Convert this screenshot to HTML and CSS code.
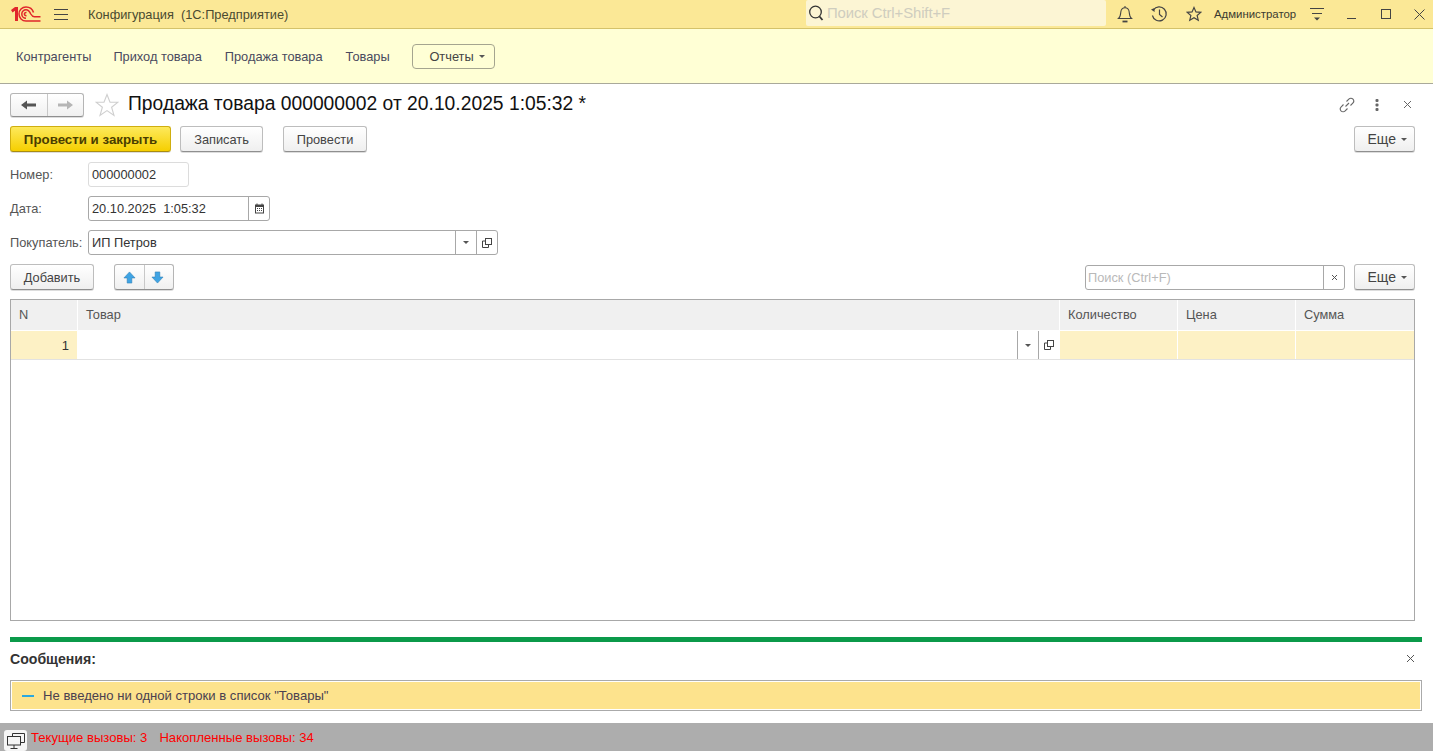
FILE: index.html
```html
<!DOCTYPE html>
<html lang="ru">
<head>
  <meta charset="UTF-8">
  <meta name="viewport" content="width=device-width, initial-scale=1.0">
  <title>Продажа товара</title>
  <link rel="stylesheet" href="styles.css">
</head>
<body>
  <header class="topbar">
    <svg class="logo" width="30" height="16" viewBox="0 0 30 16" fill="none" stroke="#e0262b" stroke-width="1.5">
      <path d="M0 4L4 1H7V15H4V4.800L1.500 6.500Z" fill="#e0262b" stroke="none"/>
      <path d="M22.500 6.500C21.500 3 18.500 1 15 1C11 1 8 4.200 8 8C8 11.800 11 15 15 15H29.500"/>
      <path d="M15 12.300C12.500 12.300 10.800 10.300 10.800 8C10.800 5.700 12.700 3.800 15 3.800C17.800 3.800 18.800 6 19.800 8C20.800 9.800 21.800 10.800 23.500 10.800H29.500"/>
      <path d="M15.500 6.500C14.300 6.300 13.400 7 13.400 8C13.400 9 14.200 9.700 15.500 9.700"/>
    </svg>
    <svg class="burger" width="14" height="12" viewBox="0 0 14 12" stroke="#444" stroke-width="1"><path d="M0 1.500H14M0 6.500H14M0 11.500H14"/></svg>
    <span class="app-title">Конфигурация&nbsp; (1С:Предприятие)</span>
    <div class="global-search">
      <svg width="16" height="18" viewBox="0 0 16 18" fill="none" stroke="#333" stroke-width="1.3"><circle cx="7.500" cy="8" r="5.800"/><path d="M11.500 12.500L14.500 16" stroke-width="1.800"/></svg>
      <span>Поиск Ctrl+Shift+F</span>
    </div>
    <svg class="ti bell" width="16" height="18" viewBox="0 0 16 18" fill="none" stroke="#444" stroke-width="1.100"><path d="M1.500 13.500C3.500 12 3.500 9.500 3.800 7C4.100 4.400 5.600 2.800 8 2.800C10.400 2.800 11.900 4.400 12.200 7C12.500 9.500 12.500 12 14.500 13.500Z"/><path d="M8 1V2.800"/><path d="M5.500 16.500H10.500" stroke-width="1.800"/></svg>
    <svg class="ti hist" width="18" height="18" viewBox="0 0 18 18" fill="none" stroke="#444" stroke-width="1.200"><path d="M3.400 5A7 7 0 1 1 2.400 10.500"/><path d="M1 4.500L4.500 3L4.600 7Z" fill="#444" stroke="none"/><path d="M9.500 4.500V9.500L12.500 12"/></svg>
    <svg class="ti star" width="16" height="16" viewBox="0 0 18 18" fill="none" stroke="#444" stroke-width="1.300"><path d="M9 1.600L11.200 6.600L16.600 7.100L12.500 10.700L13.800 16L9 13.200L4.200 16L5.500 10.700L1.400 7.100L6.800 6.600Z"/></svg>
    <span class="user">Администратор</span>
    <svg class="ti menu-more" width="14" height="14" viewBox="0 0 14 14" stroke="#444"><path d="M0 1.500H14M2 6.500H12"/><path d="M4 10.500H10L7 13.500Z" fill="#444" stroke="none"/></svg>
    <svg class="ti win min" width="10" height="12" viewBox="0 0 10 12" stroke="#444" stroke-width="1"><path d="M0 10.500H9"/></svg>
    <svg class="ti win max" width="10" height="10" viewBox="0 0 10 10" fill="none" stroke="#444" stroke-width="1"><rect x=".5" y=".5" width="9" height="9"/></svg>
    <svg class="ti win cls" width="11" height="11" viewBox="0 0 11 11" stroke="#444" stroke-width="1"><path d="M.5 .5L10.500 10.500M10.500 .5L.5 10.500"/></svg>
  </header>

  <nav class="sections">
    <a class="first">Контрагенты</a>
    <a>Приход товара</a>
    <a>Продажа товара</a>
    <a>Товары</a>
    <span class="reports">Отчеты<i class="caret"></i></span>
  </nav>

  <main class="form">
    <div class="title-row">
      <div class="btn-group nav-arrows">
        <span class="seg seg-back"><svg width="16" height="10" viewBox="0 0 16 10" fill="#555"><path d="M0 5L6 .5V3.500H15V6.500H6V9.500Z"/></svg></span>
        <span class="seg seg-fwd"><svg width="16" height="10" viewBox="0 0 16 10" fill="#b5b5b5"><path d="M15 5L9 .5V3.500H0V6.500H9V9.500Z"/></svg></span>
      </div>
      <svg class="fav" width="24" height="24" viewBox="0 0 24 24" fill="#fff" stroke="#cfcfcf" stroke-width="1.100"><path d="M12 1.500L15 9.200H23L16.600 14.200L19 22.500L12 17.600L5 22.500L7.400 14.200L1 9.200H9Z"/></svg>
      <h1>Продажа товара 000000002 от 20.10.2025 1:05:32 *</h1>
      <div class="title-tools">
        <svg width="16" height="16" viewBox="0 0 16 16" fill="none" stroke="#666" stroke-width="1.100"><path d="M6.500 9.500L10 6"/><path d="M7.500 4.500L9.800 2.200C11 1 12.800 1 14 2.200C15 3.400 15 5 13.800 6.200L11.500 8.500"/><path d="M8.500 11.500L6.200 13.800C5 15 3.200 15 2 13.800C1 12.600 1 11 2.200 9.800L4.500 7.500"/></svg>
        <svg class="dots" width="4" height="12" viewBox="0 0 4 12" fill="#666"><rect x=".5" y="0" width="3" height="3" rx="1"/><rect x=".5" y="4.500" width="3" height="3" rx="1"/><rect x=".5" y="9" width="3" height="3" rx="1"/></svg>
        <svg class="close" width="9" height="9" viewBox="0 0 9 9" stroke="#666" stroke-width="1"><path d="M1 1L8 8M8 1L1 8"/></svg>
      </div>
    </div>

    <div class="command-bar">
      <button class="btn btn-primary">Провести и закрыть</button>
      <button class="btn btn-write">Записать</button>
      <button class="btn btn-post">Провести</button>
      <button class="btn btn-more">Еще<i class="caret"></i></button>
    </div>

    <div class="field-row number-row">
      <label>Номер:</label>
      <div class="input input-number">000000002</div>
    </div>
    <div class="field-row date-row">
      <label>Дата:</label>
      <div class="input input-date">
        <span class="value">20.10.2025&nbsp; 1:05:32</span>
        <span class="addon">
          <svg width="11" height="11" viewBox="0 0 11 11" fill="#444"><path d="M1 1.500H2.500V.5H3.500V1.500H7.500V.5H8.500V1.500H10V10.500H1ZM2 4V9.500H9V4Z"/><path d="M3 5H4V6H3ZM5 5H6V6H5ZM7 5H8V6H7ZM3 7H4V8H3ZM5 7H6V8H5ZM7 7H8V8H7Z"/></svg>
        </span>
      </div>
    </div>
    <div class="field-row buyer-row">
      <label>Покупатель:</label>
      <div class="input input-buyer">
        <span class="value">ИП Петров</span>
        <span class="addon"><i class="caret"></i></span>
        <span class="addon">
          <svg width="10" height="10" viewBox="0 0 10 10" fill="none" stroke="#444"><rect x="3.500" y=".5" width="6" height="6"/><path d="M3.500 3H.5V9.500H6.500V6.500"/></svg>
        </span>
      </div>
    </div>

    <div class="table-tools">
      <button class="btn btn-add">Добавить</button>
      <div class="btn-group move">
        <span class="seg seg-up"><svg width="13" height="13" viewBox="0 0 14 14" fill="#3fa4e4" stroke="#2b7cb3" stroke-width=".6"><path d="M7 1L13 7.500H9.500V13H4.500V7.500H1Z"/></svg></span>
        <span class="seg seg-down"><svg width="13" height="13" viewBox="0 0 14 14" fill="#3fa4e4" stroke="#2b7cb3" stroke-width=".6"><path d="M7 13L13 6.500H9.500V1H4.500V6.500H1Z"/></svg></span>
      </div>
      <div class="input input-search">
        <span class="value placeholder">Поиск (Ctrl+F)</span>
        <span class="addon"><svg width="7" height="7" viewBox="0 0 7 7" stroke="#555" stroke-width="1"><path d="M1 1L6 6M6 1L1 6"/></svg></span>
      </div>
      <button class="btn btn-more">Еще<i class="caret"></i></button>
    </div>

    <div class="grid">
      <div class="grid-head">
        <div>N</div>
        <div>Товар</div>
        <div>Количество</div>
        <div>Цена</div>
        <div>Сумма</div>
      </div>
      <div class="grid-row">
        <div class="cell-num">1</div>
        <div class="cell-edit">
          <span class="spacer"></span>
          <span class="addon"><i class="caret"></i></span>
          <span class="addon">
            <svg width="10" height="10" viewBox="0 0 10 10" fill="none" stroke="#444"><rect x="3.500" y=".5" width="6" height="6"/><path d="M3.500 3H.5V9.500H6.500V6.500"/></svg>
          </span>
        </div>
        <div class="cell-ro"></div>
        <div class="cell-ro"></div>
        <div class="cell-ro"></div>
      </div>
    </div>
  </main>

  <section class="messages">
    <div class="messages-head">
      <h2>Сообщения:</h2>
      <svg width="9" height="9" viewBox="0 0 9 9" stroke="#555" stroke-width="1"><path d="M1 1L8 8M8 1L1 8"/></svg>
    </div>
    <div class="message">
      <i class="dash"></i>
      <span>Не введено ни одной строки в список "Товары"</span>
    </div>
  </section>

  <footer class="status">
    <span class="status-icon">
      <svg width="18" height="16" viewBox="0 0 18 16" fill="none" stroke="#333" stroke-width="1"><path d="M5.500 3.500V.5H17.500V9.500H13.500"/><rect x=".5" y="3.500" width="13" height="8.500"/><path d="M7 12V15M3.500 15.500H10.500"/></svg>
    </span>
    <span>Текущие вызовы: 3</span>
    <span>Накопленные вызовы: 34</span>
  </footer>
</body>
</html>
```

FILE: styles.css
```css
* {
  box-sizing: border-box;
}
html, body {
  height: 100%;
}
body {
  display: flex;
  flex-direction: column;
  margin: 0;
  overflow: hidden;
  font-family: "Liberation Sans", Arial, sans-serif;
  font-size: 12.8px;
  color: #333;
  background: #fff;
}
h1, h2 {
  margin: 0;
  font-weight: normal;
}
i {
  display: block;
}
svg {
  display: block;
  flex: none;
}

/* top bar */
.topbar {
  display: flex;
  align-items: center;
  flex: none;
  height: 29px;
  padding-left: 11px;
  background: #fbe896;
  border-bottom: 1px solid #d4c26a;
}
.burger {
  margin-left: 13px;
}
.app-title {
  margin-left: 20px;
  width: 718px;
  color: #4a4a30;
}
.global-search {
  display: flex;
  align-items: center;
  gap: 3px;
  width: 300px;
  height: 26px;
  margin-top: -3px;
  padding-left: 2px;
  background: #fcf5d4;
  border-radius: 2px;
  color: #cfcdbf;
  white-space: nowrap;
}
.global-search span {
  font-size: 14.9px;
  letter-spacing: -.1px;
}
.ti.bell {
  margin-left: 11px;
}
.ti.hist {
  margin-left: 17px;
}
.ti.star {
  margin-left: 18px;
}
.user {
  margin-left: 12px;
  width: 96px;
  font-size: 11.4px;
  color: #3a3a30;
  white-space: nowrap;
}
.win.min {
  margin-left: 23px;
}
.win.max {
  margin-left: 24px;
}
.win.cls {
  margin-left: 23px;
}

/* sections */
.sections {
  display: flex;
  align-items: center;
  flex: none;
  height: 55px;
  padding-left: 16px;
  gap: 23px;
  background: #ffffd5;
  border-bottom: 1px solid #a9a99a;
}
.sections a {
  color: #4a4a5e;
}
.sections .first {
  margin-right: -1px;
}
.reports {
  display: flex;
  align-items: center;
  justify-content: flex-end;
  gap: 5px;
  width: 83px;
  height: 25px;
  margin-left: -1px;
  padding-right: 9px;
  border: 1px solid #a5a58f;
  border-radius: 4px;
  color: #444;
}
.caret {
  width: 0;
  height: 0;
  border-left: 3px solid transparent;
  border-right: 3px solid transparent;
  border-top: 3px solid #555;
}

/* form */
.form {
  flex: 1;
  display: flex;
  flex-direction: column;
  min-height: 0;
  padding: 8px 18px 0 10px;
}
.title-row {
  display: flex;
  align-items: center;
  height: 25px;
}
.btn-group {
  display: flex;
  height: 100%;
  background: linear-gradient(#fff, #f0f0f0);
  border: 1px solid #b5b5b5;
  border-bottom-color: #8f8f8f;
  border-radius: 3px;
  box-shadow: 0 1px 0 #ddd;
}
.seg {
  display: flex;
  align-items: center;
  justify-content: center;
}
.seg + .seg {
  border-left: 1px solid #c8c8c8;
}
.nav-arrows {
  width: 74px;
  height: 24px;
}
.seg-back {
  width: 36px;
}
.seg-fwd {
  width: 36px;
}
.fav {
  margin-left: 11px;
}
.title-row h1 {
  margin: -2px 0 0 9px;
  font-size: 19.3px;
  color: #111;
  white-space: nowrap;
}
.title-tools {
  display: flex;
  align-items: center;
  margin-left: auto;
  margin-right: 4px;
}
.dots {
  margin-left: 20px;
}
.title-tools .close {
  margin-left: 24px;
  margin-right: -1px;
}

.command-bar {
  display: flex;
  align-items: flex-start;
  height: 26px;
  margin-top: 9px;
}
.btn {
  height: 26px;
  padding: 0;
  font: inherit;
  color: #444;
  background: linear-gradient(#fff, #efefef);
  border: 1px solid #bdbdbd;
  border-bottom-color: #8f8f8f;
  border-radius: 3px;
  box-shadow: 0 1px 0 #ddd;
}
.btn-primary {
  width: 161px;
  font-size: 13.3px;
  font-weight: bold;
  color: #4a3d00;
  background: linear-gradient(#fde95c, #f6cf00);
  border-color: #cfae10;
  border-bottom-color: #a98c10;
}
.btn-write {
  width: 83px;
  margin-left: 9px;
}
.btn-post {
  width: 84px;
  margin-left: 20px;
}
.btn-more {
  display: flex;
  align-items: center;
  justify-content: flex-end;
  gap: 5px;
  width: 61px;
  margin-left: auto;
  padding-right: 7px;
  font-size: 14px;
}

.field-row {
  display: flex;
  align-items: center;
  height: 25px;
  margin-top: 9px;
}
.number-row {
  margin-top: 10px;
}
.field-row label {
  width: 78px;
  color: #555;
  white-space: nowrap;
}
.input {
  display: flex;
  align-items: center;
  height: 25px;
  background: #fff;
  border: 1px solid #a8a8a8;
  border-radius: 3px;
  color: #333;
}
.input .value {
  flex: 1;
  padding-left: 3px;
  white-space: nowrap;
}
.input-number {
  width: 101px;
  padding-left: 3px;
  border-color: #dcdcdc;
}
.input-date {
  width: 182px;
}
.input-buyer {
  width: 410px;
}
.addon {
  display: flex;
  align-items: center;
  justify-content: center;
  width: 21px;
  height: 100%;
  border-left: 1px solid #a8a8a8;
}

.table-tools {
  display: flex;
  align-items: center;
  height: 26px;
  margin-top: 9px;
}
.btn-add {
  width: 84px;
}
.move {
  width: 60px;
  height: 26px;
  margin-left: 20px;
}
.seg-up {
  width: 29px;
  padding-right: 1px;
}
.seg-down {
  width: 29px;
  padding-right: 3px;
}
.input-search {
  width: 260px;
  margin-left: auto;
}
.input-search .placeholder {
  padding-left: 2px;
  color: #b9b9b9;
}
.table-tools .btn-more {
  margin-left: 9px;
}

/* table */
.grid {
  height: 322px;
  margin-top: 9px;
  border: 1px solid #a8a8a8;
}
.grid-head,
.grid-row {
  display: grid;
  grid-template-columns: 67px 982px 118px 118px 118px;
}
.grid-head {
  height: 31px;
  background: #f0f0f0;
  border-bottom: 1px solid #fff;
  color: #555;
}
.grid-head div {
  display: flex;
  align-items: center;
  padding: 0 0 2px 8px;
  border-right: 1px solid #fff;
}
.grid-head div:last-child {
  border-right: 0;
}
.grid-row {
  height: 29px;
  border-bottom: 1px solid #e2e2e2;
}
.cell-num {
  display: flex;
  align-items: center;
  justify-content: flex-end;
  padding-right: 8px;
  background: #fdf1c5;
  border-right: 1px solid #fff;
  font-size: 13px;
}
.cell-edit {
  display: flex;
  align-items: center;
  padding-right: 1px;
}
.cell-edit .spacer {
  flex: 1;
}
.cell-ro {
  background: #fdf1c5;
  border-right: 1px solid #fff;
}
.cell-ro:last-child {
  border-right: 0;
}

/* messages */
.messages {
  flex: none;
  height: 86px;
  margin: 0 11px 0 10px;
  border-top: 5px solid #0b9a4a;
}
.messages-head {
  display: flex;
  align-items: center;
  justify-content: space-between;
  height: 33px;
  padding-right: 7px;
}
.messages-head h2 {
  font-size: 14.1px;
  font-weight: bold;
  color: #333;
}
.message {
  display: flex;
  align-items: center;
  height: 31px;
  margin-top: 5px;
  padding-left: 11px;
  font-size: 13.1px;
  background: #fde38d;
  border: 1px solid #aaa;
  box-shadow: inset 0 0 0 1px #fff;
  color: #4a4050;
}
.dash {
  width: 12px;
  height: 2px;
  margin-right: 9px;
  background: #2aa8e0;
}

/* status */
.status {
  display: flex;
  align-items: center;
  flex: none;
  height: 28px;
  padding: 1px 0 0 4px;
  gap: 12px;
  font-size: 13.1px;
  background: #adadad;
  color: #f00;
}
.status-icon {
  display: flex;
  align-items: flex-start;
  justify-content: center;
  align-self: flex-end;
  width: 23px;
  height: 21px;
  margin-right: -8px;
  padding-top: 3px;
  background: #f5f5f5;
  border-radius: 3px;
}
```
